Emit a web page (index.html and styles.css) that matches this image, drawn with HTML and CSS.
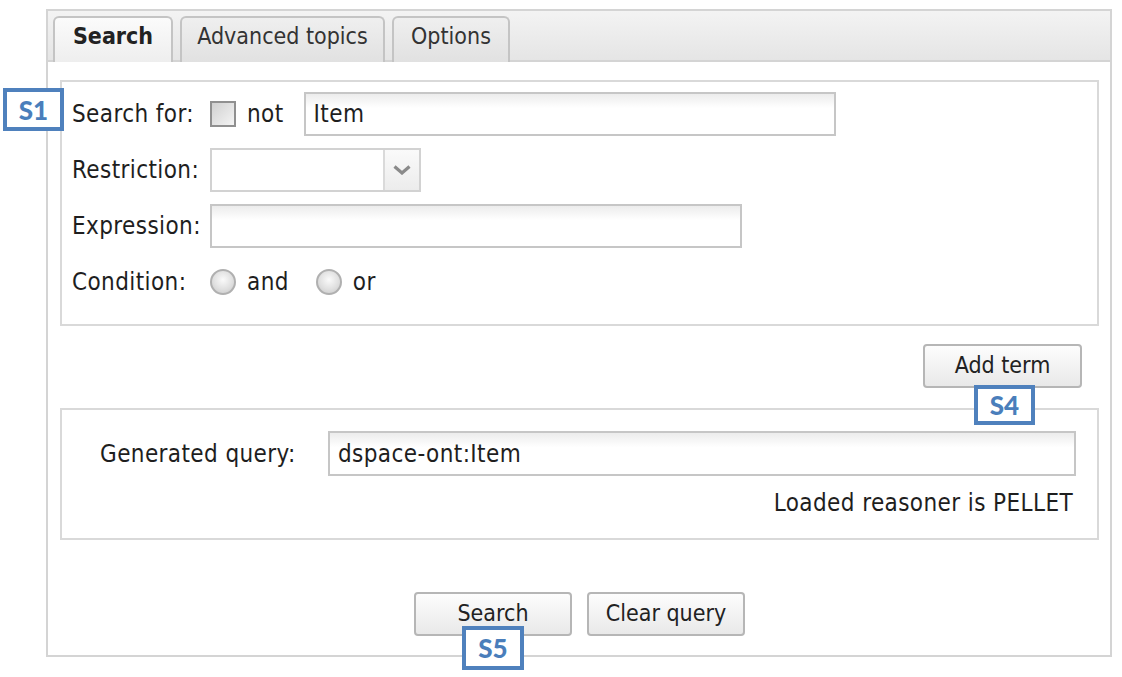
FILE: index.html
```html
<!DOCTYPE html>
<html>
<head>
<meta charset="utf-8">
<link rel="stylesheet" href="styles.css">
</head>
<body>
<div class="stage">
  <div class="box">
    <div class="tabbar">
      <div class="tab active">Search</div>
      <div class="tab t-adv">Advanced topics</div>
      <div class="tab t-opt">Options</div>
    </div>
    <div class="content">
      <div class="panel terms">
        <div class="row">
          <span class="lbl">Search for:</span>
          <div class="ctrl">
            <span class="check"></span>
            <span class="word">not</span>
            <div class="input in-item">Item</div>
          </div>
        </div>
        <div class="row">
          <span class="lbl">Restriction:</span>
          <div class="ctrl">
            <div class="select">
              <span class="sel-val"></span>
              <span class="sel-arrow">
                <svg width="18" height="10" viewBox="0 0 18 10"><path d="M1.5 1.5 L9 8 L16.5 1.5" fill="none" stroke="#8a8a8a" stroke-width="3.2" stroke-linejoin="miter"/></svg>
              </span>
            </div>
          </div>
        </div>
        <div class="row">
          <span class="lbl">Expression:</span>
          <div class="ctrl">
            <div class="input in-expr"></div>
          </div>
        </div>
        <div class="row">
          <span class="lbl">Condition:</span>
          <div class="ctrl">
            <span class="radio"></span>
            <span class="word">and</span>
            <span class="radio r2"></span>
            <span class="word">or</span>
          </div>
        </div>
      </div>
      <div class="addrow">
        <div class="btn btn-add">Add term</div>
      </div>
      <div class="panel query">
        <div class="qrow">
          <span class="qlbl">Generated query:</span>
          <div class="input in-query">dspace-ont:Item</div>
        </div>
        <div class="reasoner">Loaded reasoner is PELLET</div>
      </div>
      <div class="actions">
        <div class="btn btn-act">Search</div>
        <div class="btn btn-act">Clear query</div>
      </div>
    </div>
  </div>
  <div class="tag tag-s1">S1</div>
  <div class="tag tag-s4">S4</div>
  <div class="tag tag-s5">S5</div>
</div>
</body>
</html>
```
FILE: styles.css
```css
* { box-sizing: border-box; }
html, body { margin: 0; padding: 0; background: #fff; }
body {
  font-family: "DejaVu Sans Condensed", "DejaVu Sans", sans-serif;
  font-stretch: condensed;
  font-size: 24px;
  letter-spacing: 0.4px;
  color: #1e1e1e;
}
.stage {
  position: relative;
  width: 1122px;
  height: 677px;
  padding: 9px 0 0 46px;
}
.box {
  width: 1066px;
  border: 2px solid #d4d4d4;
  background: #fff;
}
.tabbar {
  height: 51px;
  display: flex;
  align-items: flex-end;
  gap: 7px;
  padding-left: 5px;
  background: linear-gradient(#f3f3f3, #e5e5e5);
  border-bottom: 2px solid #d4d4d4;
}
.tab {
  height: 46px;
  margin-bottom: -2px;
  border: 2px solid #c4c4c4;
  border-bottom: none;
  border-radius: 6px 6px 0 0;
  background: linear-gradient(#efefef, #e1e1e1);
  display: flex;
  align-items: center;
  justify-content: center;
  font-size: 23px;
  letter-spacing: 0;
  color: #333;
  padding-bottom: 9px;
}
.tab.active {
  width: 120px;
  font-weight: bold;
  color: #222;
  background: linear-gradient(#fbfbfb, #eeeeee);
}
.t-adv { width: 205px; }
.t-opt { width: 118px; }

.content {
  padding: 18px 11px 19px 12px;
}
.panel {
  border: 2px solid #d9d9d9;
  background: #fff;
}
.terms {
  height: 246px;
  padding: 10px 10px 0 10px;
  display: flex;
  flex-direction: column;
  gap: 12px;
}
.row {
  display: flex;
  align-items: center;
  height: 44px;
}
.lbl {
  width: 138px;
  flex: none;
}
.ctrl {
  display: flex;
  align-items: center;
}
.check {
  width: 26px;
  height: 26px;
  border: 2px solid #909090;
  background: linear-gradient(135deg, #d0d0d0, #f4f4f4);
  flex: none;
}
.word { margin-left: 11px; }
.input {
  height: 44px;
  border: 2px solid #c6c6c6;
  background: linear-gradient(#ececec, #ffffff 35%);
  padding: 0 8px;
  display: flex;
  align-items: center;
}
.in-item { width: 532px; margin-left: 20px; }
.in-expr { width: 532px; }
.select {
  width: 211px;
  height: 44px;
  border: 2px solid #d2d2d2;
  display: flex;
  background: #fff;
}
.sel-val { flex: 1; }
.sel-arrow {
  width: 36px;
  border-left: 2px solid #dadada;
  background: linear-gradient(#fafafa, #ececec);
  display: flex;
  align-items: center;
  justify-content: center;
}
.radio {
  width: 26px;
  height: 26px;
  border-radius: 50%;
  border: 2px solid #b0b0b0;
  background: radial-gradient(circle at 50% 40%, #fafafa 0, #e0e0e0 55%, #c6c6c6 100%);
  flex: none;
}
.r2 { margin-left: 27px; }

.addrow {
  display: flex;
  justify-content: flex-end;
  padding: 18px 17px 20px 0;
}
.btn {
  height: 44px;
  border: 2px solid #b6b6b6;
  border-radius: 4px;
  background: linear-gradient(#fdfdfd, #e9e9e9);
  display: flex;
  align-items: center;
  justify-content: center;
  font-size: 23px;
  letter-spacing: 0;
  color: #222;
  padding-bottom: 2px;
}
.btn-add { width: 159px; }

.query {
  height: 132px;
  padding: 21px 21px 0 38px;
}
.qrow {
  display: flex;
  align-items: center;
}
.qlbl { width: 228px; flex: none; }
.in-query { flex: 1; height: 45px; }
.reasoner {
  text-align: right;
  margin-top: 13px;
  padding-right: 3px;
}

.actions {
  display: flex;
  justify-content: center;
  gap: 15px;
  padding-top: 52px;
}
.btn-act { width: 158px; }

.tag {
  position: absolute;
  border: 4px solid #4f81bd;
  background: #fff;
  color: #4a7ebb;
  font-family: "Lato", "Open Sans", sans-serif;
  font-weight: 900;
  font-size: 26px;
  letter-spacing: 0;
  font-stretch: normal;
  display: flex;
  align-items: center;
  justify-content: center;
}
.tag-s1 { left: 3px; top: 88px; width: 61px; height: 43px; }
.tag-s4 { left: 974px; top: 385px; width: 61px; height: 40px; }
.tag-s5 { left: 462px; top: 626px; width: 62px; height: 44px; }
```
